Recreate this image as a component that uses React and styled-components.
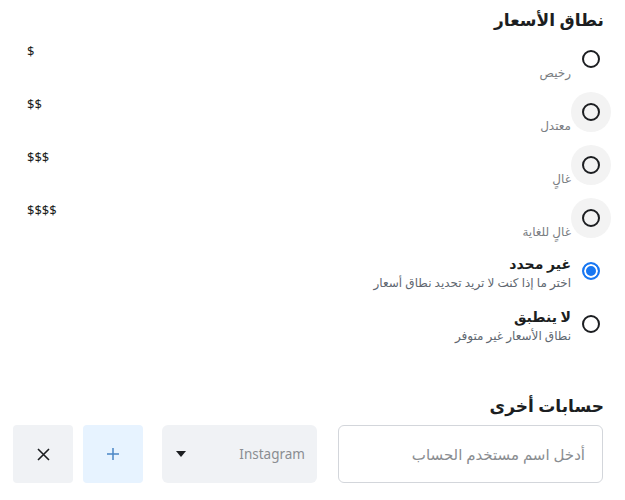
import { createGlobalStyle, styled } from "styled-components";

const GlobalStyle = createGlobalStyle`
  body {
    margin: 0;
    background: #ffffff;
    font-family: "Noto Sans", "DejaVu Sans", sans-serif;
    color: #1c1e21;
  }
`;

const Page = styled.div`
  direction: rtl;
  padding: 8px 14px 0 13px;
`;

const SectionTitle = styled.h2`
  margin: 0 0 7px;
  padding-right: 7px;
  font-size: 17px;
  line-height: 24px;
  font-weight: 600;
  color: #1c1e21;
`;

const OptionList = styled.div`
  display: flex;
  flex-direction: column;
  gap: 10px;
`;

const OptionRow = styled.label`
  display: flex;
  align-items: flex-start;
  min-height: 43px;
  cursor: pointer;
`;

const RadioWrap = styled.span`
  flex: 0 0 40px;
  height: 40px;
  border-radius: 50%;
  display: flex;
  align-items: center;
  justify-content: center;
  background: ${(p) => (p.$halo ? "#f3f3f3" : "transparent")};
`;

const RadioDot = styled.span`
  box-sizing: border-box;
  width: 18px;
  height: 18px;
  border-radius: 50%;
  border: 2px solid ${(p) => (p.$checked ? "#1877f2" : "#1c1e21")};
  background: ${(p) => (p.$checked ? "#1877f2" : "transparent")};
  box-shadow: ${(p) => (p.$checked ? "inset 0 0 0 2px #ffffff" : "none")};
`;

const OptionText = styled.span`
  flex: 1;
  display: flex;
  flex-direction: column;
  padding-top: 3px;
`;

const PriceTag = styled.span`
  direction: ltr;
  text-align: left;
  padding-left: 14px;
  font-size: 13px;
  line-height: 18px;
  color: #1c1e21;
`;

const OptionTitle = styled.span`
  font-size: 14px;
  line-height: 20px;
  font-weight: 700;
  color: #1c1e21;
`;

const OptionHint = styled.span`
  margin-top: ${(p) => (p.$under ? "4px" : "0")};
  font-size: 12px;
  line-height: 18px;
  color: ${(p) => (p.$muted ? "#7a7d82" : "#606770")};
`;

const AccountsSection = styled.section`
  margin-top: 47px;
`;

const AccountRow = styled.div`
  display: flex;
  align-items: stretch;
  height: 58px;
  margin-top: 7px;
  padding-right: 8px;
`;

const UsernameInput = styled.input`
  flex: 1;
  box-sizing: border-box;
  border: 1px solid #d3d6db;
  border-radius: 6px;
  padding: 0 17px;
  font-family: inherit;
  font-size: 15px;
  color: #1c1e21;
  direction: rtl;
  &::placeholder {
    color: #8a8d91;
  }
`;

const NetworkSelect = styled.div`
  flex: 0 0 155px;
  margin-right: 21px;
  border-radius: 6px;
  background: #f0f2f5;
  display: flex;
  align-items: center;
  justify-content: space-between;
  padding: 0 12px 0 14px;
  box-sizing: border-box;
  font-size: 13.5px;
  color: #8a8d91;
`;

const Caret = styled.span`
  width: 0;
  height: 0;
  border-left: 5px solid transparent;
  border-right: 5px solid transparent;
  border-top: 6px solid #1c1e21;
`;

const SquareButton = styled.button`
  flex: 0 0 60px;
  margin-right: ${(p) => p.$gap}px;
  border: none;
  border-radius: 4px;
  background: ${(p) => (p.$primary ? "#e7f3ff" : "#f0f2f5")};
  color: ${(p) => (p.$primary ? "#4b86c6" : "#1c1e21")};
  display: flex;
  align-items: center;
  justify-content: center;
  padding: 0;
  cursor: pointer;
`;

const priceOptions = [
  { tag: "$", hint: "رخيص", halo: false },
  { tag: "$$", hint: "معتدل", halo: true },
  { tag: "$$$", hint: "غالٍ", halo: true },
  { tag: "$$$$", hint: "غالٍ للغاية", halo: true },
];

const extraOptions = [
  { title: "غير محدد", hint: "اختر ما إذا كنت لا تريد تحديد نطاق أسعار", checked: true },
  { title: "لا ينطبق", hint: "نطاق الأسعار غير متوفر", checked: false },
];

export default function App() {
  return (
    <>
      <GlobalStyle />
      <Page>
        <SectionTitle>نطاق الأسعار</SectionTitle>
        <OptionList>
          {priceOptions.map((opt) => (
            <OptionRow key={opt.tag}>
              <RadioWrap $halo={opt.halo}>
                <RadioDot />
              </RadioWrap>
              <OptionText>
                <PriceTag>{opt.tag}</PriceTag>
                <OptionHint $under $muted>
                  {opt.hint}
                </OptionHint>
              </OptionText>
            </OptionRow>
          ))}
          {extraOptions.map((opt) => (
            <OptionRow key={opt.title}>
              <RadioWrap>
                <RadioDot $checked={opt.checked} />
              </RadioWrap>
              <OptionText>
                <OptionTitle>{opt.title}</OptionTitle>
                <OptionHint>{opt.hint}</OptionHint>
              </OptionText>
            </OptionRow>
          ))}
        </OptionList>

        <AccountsSection>
          <SectionTitle>حسابات أخرى</SectionTitle>
          <AccountRow>
            <UsernameInput placeholder="أدخل اسم مستخدم الحساب" />
            <NetworkSelect>
              <span>Instagram</span>
              <Caret />
            </NetworkSelect>
            <SquareButton $primary $gap={19}>
              <svg width="12" height="12" viewBox="0 0 12 12">
                <path d="M6 0v12M0 6h12" stroke="currentColor" strokeWidth="1.5" />
              </svg>
            </SquareButton>
            <SquareButton $gap={10}>
              <svg width="13" height="13" viewBox="0 0 13 13">
                <path d="M1 1l11 11M12 1L1 12" stroke="currentColor" strokeWidth="1.6" />
              </svg>
            </SquareButton>
          </AccountRow>
        </AccountsSection>
      </Page>
    </>
  );
}
